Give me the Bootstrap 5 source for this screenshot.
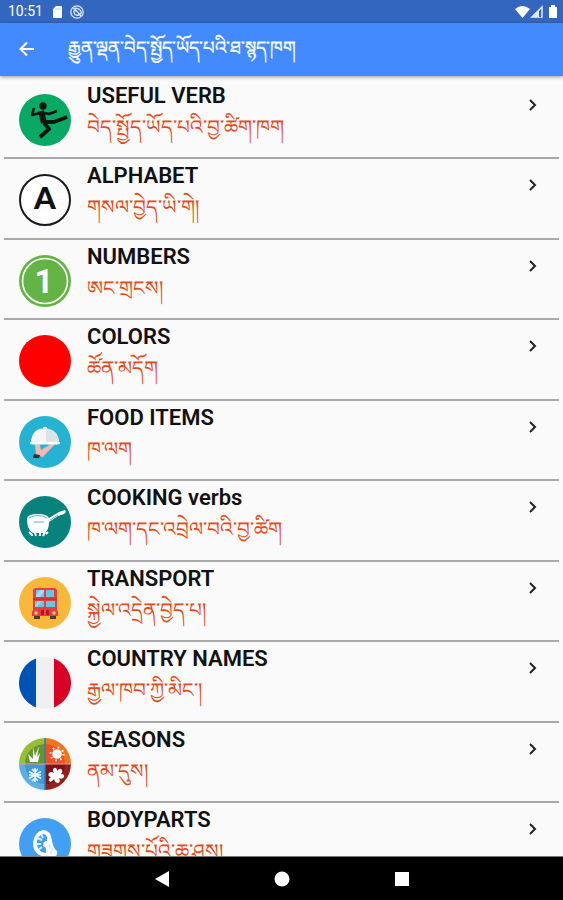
<!DOCTYPE html>
<html lang="en">
<head>
<meta charset="utf-8">
<meta name="viewport" content="width=device-width, initial-scale=1">
<title>Phrasebook</title>
<link href="https://cdn.jsdelivr.net/npm/bootstrap@5.3.0/dist/css/bootstrap.min.css" rel="stylesheet">
<style>
body{font-family:Roboto,"Noto Sans","Liberation Sans",sans-serif;background:#fafafa}
.status{background:#3367bf;height:23px;font-size:14px;line-height:23px;padding:0 5px 0 8px}
.appbar{background:#448aff;height:53px;padding:0 16px;box-shadow:0 1px 4px rgba(0,0,0,.4);z-index:1}
.appbar h1{font-size:18px;line-height:26px;font-weight:400;padding-left:6px;padding-bottom:4px;-webkit-text-stroke:.3px}
.topics{padding:3px 4px 0;min-height:0}
.topic{height:80px;border-bottom:2px solid #a9a9a9;padding:15px 20px 0 15px}
.topic:nth-child(even){height:81px}
.topic>svg{width:52px;height:52px}
.words{margin-top:-12px}
.name{font-size:22px;line-height:28px;font-weight:600;color:#111}
.native{font-size:20px;line-height:34px;color:#e64a19}
.topic>.chev{width:12px;height:12px;margin-top:5px}
.sysbar{background:#000;height:44px;border-top:1px solid #777;gap:104px}
.sysbar svg{width:16px;height:16px;display:block}
</style>
<script src="https://cdn.jsdelivr.net/npm/bootstrap@5.3.0/dist/js/bootstrap.bundle.min.js"></script>
</head>
<body>
<div class="vh-100 d-flex flex-column overflow-hidden">
<div class="status d-flex align-items-center text-white flex-shrink-0">
  <span>10:51</span>
  <svg class="ms-1" width="18" height="14" viewBox="0 0 18 14"><path d="M9 1h5q1 0 1 1v10q0 1-1 1H7q-1 0-1-1V4z" fill="#fff"/><path d="M9 3v2M11 3v2M13 3v2" stroke="#b9cdec"/></svg>
  <svg class="ms-1" width="16" height="16" viewBox="0 0 16 16" fill="none" stroke="#dce7fa" stroke-width="1.300"><circle cx="8" cy="8" r="6.200"/><path d="M4 5q4-2 7 1t-1 5q-4 1-5-2t2-2M5 4l7 8"/></svg>
  <svg class="ms-auto" width="43" height="16" viewBox="0 0 43 16"><path d="M0 5Q7-1 15 5L7.500 14z" fill="#fff"/><path d="M27 3v10H17z" fill="none" stroke="#e3ecfb" stroke-width="1.500"/><path d="M17 13L24 6v7z" fill="#dfe9fa"/><path d="M25 8v5" stroke="#3367bf" stroke-width="2"/><path d="M34 3h2V1h4v2h2v11h-8z" fill="#fff"/></svg>
</div>
<header class="appbar d-flex align-items-center text-white flex-shrink-0 position-relative">
  <button class="btn p-0 border-0 text-white d-flex" type="button" aria-label="Back"><svg width="22" height="22" viewBox="0 0 22 22" fill="none" stroke="#fff" stroke-width="2"><path d="M18 10H5M11 3.500L4.500 10L11 16.500"/></svg></button>
  <h1 class="mb-0 ms-4 text-nowrap" lang="bo">རྒྱུན་ལྡན་བེད་སྤྱོད་ཡོད་པའི་ཐ་སྙད་ཁག</h1>
</header>
<main class="topics flex-grow-1 overflow-hidden">
  <a href="#" class="topic d-flex align-items-start gap-3 text-decoration-none">
    <svg viewBox="0 0 52 52"><circle cx="26" cy="26" r="26" fill="#08a964"/><g fill="none" stroke="#101510" stroke-linejoin="round"><path d="M22 17L25 29" stroke-width="6"/><path d="M21 19L13 21L15 14M25 19L30 20L38 17" stroke-width="2.500"/><path d="M25 28L35 28L48 23" stroke-width="4"/><path d="M25 29L30 35L21 43" stroke-width="4"/></g><circle cx="24" cy="12" r="3.700" fill="#101510"/></svg>
    <span class="words flex-grow-1"><span class="name d-block">USEFUL VERB</span><span class="native d-block" lang="bo">བེད་སྤྱོད་ཡོད་པའི་བྱ་ཚིག་ཁག</span></span>
    <svg class="chev" viewBox="0 0 12 12" fill="none" stroke="#222" stroke-width="2"><path d="M3 1L8 6L3 11"/></svg>
  </a>
  <a href="#" class="topic d-flex align-items-start gap-3 text-decoration-none">
    <svg viewBox="0 0 52 52"><circle cx="26" cy="26" r="25" fill="#fff" stroke="#17191f" stroke-width="2"/><text x="26" y="35" text-anchor="middle" font-family="Lato,sans-serif" font-weight="900" font-size="31" fill="#111">A</text></svg>
    <span class="words flex-grow-1"><span class="name d-block">ALPHABET</span><span class="native d-block" lang="bo">གསལ་བྱེད་ཡི་གེ།</span></span>
    <svg class="chev" viewBox="0 0 12 12" fill="none" stroke="#222" stroke-width="2"><path d="M3 1L8 6L3 11"/></svg>
  </a>
  <a href="#" class="topic d-flex align-items-start gap-3 text-decoration-none">
    <svg viewBox="0 0 52 52"><circle cx="26" cy="26" r="26" fill="#64b445"/><circle cx="26" cy="26" r="22.500" fill="none" stroke="#fff" stroke-width="1.600"/><text x="25" y="38" text-anchor="middle" font-family="Roboto,sans-serif" font-weight="700" font-size="33" fill="#fff">1</text></svg>
    <span class="words flex-grow-1"><span class="name d-block">NUMBERS</span><span class="native d-block" lang="bo">ཨང་གྲངས།</span></span>
    <svg class="chev" viewBox="0 0 12 12" fill="none" stroke="#222" stroke-width="2"><path d="M3 1L8 6L3 11"/></svg>
  </a>
  <a href="#" class="topic d-flex align-items-start gap-3 text-decoration-none">
    <svg viewBox="0 0 52 52"><circle cx="26" cy="26" r="26" fill="#f00"/></svg>
    <span class="words flex-grow-1"><span class="name d-block">COLORS</span><span class="native d-block" lang="bo">ཚོན་མདོག</span></span>
    <svg class="chev" viewBox="0 0 12 12" fill="none" stroke="#222" stroke-width="2"><path d="M3 1L8 6L3 11"/></svg>
  </a>
  <a href="#" class="topic d-flex align-items-start gap-3 text-decoration-none">
    <svg viewBox="0 0 52 52"><circle cx="26" cy="26" r="26" fill="#26b3d3"/><path d="M16 28L21 29L22 34L32 28H36L24 41L17 39z" fill="#f4b9b3"/><path d="M15 38L21 39L20 42H14z" fill="#26323c"/><path d="M12 26Q13 13 24 12.500V11h4v1.500Q39 14 40 26z" fill="#f4f6f7"/><path d="M27 12.500Q39 14 40 26H27z" fill="#dbe3e7"/><path d="M11 26h30v1.500l-2 1H13l-2-1z" fill="#fff"/></svg>
    <span class="words flex-grow-1"><span class="name d-block">FOOD ITEMS</span><span class="native d-block" lang="bo">ཁ་ལག</span></span>
    <svg class="chev" viewBox="0 0 12 12" fill="none" stroke="#222" stroke-width="2"><path d="M3 1L8 6L3 11"/></svg>
  </a>
  <a href="#" class="topic d-flex align-items-start gap-3 text-decoration-none">
    <svg viewBox="0 0 52 52"><circle cx="26" cy="26" r="26" fill="#07827c"/><path d="M8 23Q8 18 19 18Q28 18 30 22L40 16L46 14Q48 16 45 18L39 20L30 26Q30 35 25 37H14Q8 34 8 23z" fill="#fff"/><path d="M10 22Q19 17 28 22M15 26h10M31 24L39 19" fill="none" stroke="#6daea9"/><path d="M10 36q3 2 3 4m3-3l1 3m4-3v3m5-4l-2 4m5-4l-2 2" stroke="#fff" stroke-width="2" fill="none"/></svg>
    <span class="words flex-grow-1"><span class="name d-block">COOKING verbs</span><span class="native d-block" lang="bo">ཁ་ལག་དང་འབྲེལ་བའི་བྱ་ཚིག</span></span>
    <svg class="chev" viewBox="0 0 12 12" fill="none" stroke="#222" stroke-width="2"><path d="M3 1L8 6L3 11"/></svg>
  </a>
  <a href="#" class="topic d-flex align-items-start gap-3 text-decoration-none">
    <svg viewBox="0 0 52 52"><circle cx="26" cy="26" r="26" fill="#f8b93b"/><path d="M15 38h6v4h-6zM31 38h6v4h-6z" fill="#4d3b38"/><path d="M16 11h20l2 2v20l1 2v4H13v-4l1-2V13z" fill="#e83b42"/><path d="M14 22h24" stroke="#b52435"/><path d="M17 13h8v7h-8zM27 13h8v7h-8zM16 24h9v6h-9zM27 24h9v6h-9z" fill="#5fcbe3"/><path d="M17 18l4-5h4v2l-4 5h-4zM16 28l4-4h3l-6 6h-1z" fill="#9ee0ed"/><path d="M22 33h8v5h-8z" fill="#b31727"/><path d="M25 33h2v5h-2z" fill="#df4f4c"/><circle cx="17" cy="36" r="1.700" fill="#ffd28a"/><circle cx="35" cy="36" r="1.700" fill="#ffd28a"/></svg>
    <span class="words flex-grow-1"><span class="name d-block">TRANSPORT</span><span class="native d-block" lang="bo">སྐྱེལ་འདྲེན་བྱེད་པ།</span></span>
    <svg class="chev" viewBox="0 0 12 12" fill="none" stroke="#222" stroke-width="2"><path d="M3 1L8 6L3 11"/></svg>
  </a>
  <a href="#" class="topic d-flex align-items-start gap-3 text-decoration-none">
    <svg viewBox="0 0 52 52"><circle cx="26" cy="26" r="26" fill="#f0f0f2"/><path d="M17 1.600A26 26 0 0 0 17 50.400z" fill="#0052b4"/><path d="M35 1.600A26 26 0 0 1 35 50.400z" fill="#d80027"/></svg>
    <span class="words flex-grow-1"><span class="name d-block">COUNTRY NAMES</span><span class="native d-block" lang="bo">རྒྱལ་ཁབ་ཀྱི་མིང་།</span></span>
    <svg class="chev" viewBox="0 0 12 12" fill="none" stroke="#222" stroke-width="2"><path d="M3 1L8 6L3 11"/></svg>
  </a>
  <a href="#" class="topic d-flex align-items-start gap-3 text-decoration-none">
    <svg viewBox="0 0 52 52"><path d="M26 26V0A26 26 0 0 0 0 26z" fill="#98be35"/><path d="M26 26V0A26 26 0 0 1 52 26z" fill="#ef761f"/><path d="M26 26H0A26 26 0 0 0 26 52z" fill="#5daee3"/><path d="M26 26H52A26 26 0 0 1 26 52z" fill="#951f1c"/><path d="M26 6V26H6A20 20 0 0 1 26 6z" fill="#64952f"/><path d="M26 6V26H46A20 20 0 0 0 26 6z" fill="#ec5026"/><path d="M26 26H6A20 20 0 0 0 26 46z" fill="#3f98d7"/><path d="M26 26H46A20 20 0 0 1 26 46z" fill="#7f1417"/><path d="M26 0v52" stroke="#2383b5" stroke-width="1.500"/><path d="M0 26h52" stroke="#dca18a"/><path d="M11 24L9 16L14 21L14 9L16 18L20 8L18 19L21 15L19 24z" fill="#fff"/><circle cx="38" cy="16" r="4.800" fill="#fff"/><circle cx="38" cy="16" r="6.500" fill="none" stroke="#fff" stroke-width="2" stroke-dasharray="1.500 3.600"/><path d="M16 30v14M10 33.500l12 7M10 40.500l12-7M13 31l3 3 3-3M13 43l3-3 3 3M10 37h12" fill="none" stroke="#e4f5ff" stroke-width="1.600"/><path d="M35 30q3-1 3 3q3-4 5-1q1 2-1 4q4 0 3 3q-2 3-5 1q2 4-1 5q-3 0-4-4q-3 4-5 2q-1-2 2-4q-4-1-2-4q2-2 5 0q-2-3 0-5z" fill="#fff"/></svg>
    <span class="words flex-grow-1"><span class="name d-block">SEASONS</span><span class="native d-block" lang="bo">ནམ་དུས།</span></span>
    <svg class="chev" viewBox="0 0 12 12" fill="none" stroke="#222" stroke-width="2"><path d="M3 1L8 6L3 11"/></svg>
  </a>
  <a href="#" class="topic d-flex align-items-start gap-3 text-decoration-none">
    <svg viewBox="0 0 52 52"><circle cx="26" cy="26" r="26" fill="#42a0f2"/><path d="M24 12Q15 14 14 25Q14 37 26 39L37 38Q40 34 36 31Q34 28 33 23Q32 12 24 12z" fill="#fff"/><path d="M24 16Q29 16 28 23Q24 23 24 28Q28 29 27 35Q19 34 18 27Q17 18 24 16z" fill="#42a0f2"/><path d="M18 20l5 2M17 26l5 0M19 32l4-3M22 16l2 4M30 26l2 5M34 31l-3 5" stroke="#d6edff" stroke-width="2"/></svg>
    <span class="words flex-grow-1"><span class="name d-block">BODYPARTS</span><span class="native d-block" lang="bo">གཟུགས་པོའི་ཆ་ཤས།</span></span>
    <svg class="chev" viewBox="0 0 12 12" fill="none" stroke="#222" stroke-width="2"><path d="M3 1L8 6L3 11"/></svg>
  </a>
</main>
<nav class="sysbar d-flex justify-content-center align-items-center flex-shrink-0" aria-label="System">
  <button class="btn p-0 border-0" type="button" aria-label="Back"><svg viewBox="0 0 16 16"><path d="M15 0v16L1 8z" fill="#fff"/></svg></button>
  <button class="btn p-0 border-0" type="button" aria-label="Home"><svg viewBox="0 0 16 16"><circle cx="8" cy="8" r="7.500" fill="#fff"/></svg></button>
  <button class="btn p-0 border-0" type="button" aria-label="Recent apps"><svg viewBox="0 0 16 16"><path d="M1 1h14v14H1z" fill="#fff"/></svg></button>
</nav>
</div>
</body>
</html>
